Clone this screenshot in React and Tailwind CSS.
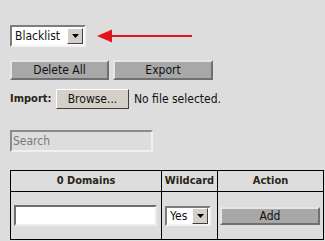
import React from 'react'

const font = { fontFamily: '"DejaVu Sans Condensed", "DejaVu Sans", Tahoma, sans-serif' }

const Raised = ({ children, className = '' }) => (
  <div
    className={`flex items-center justify-center border-2 border-t-[#e6e6e6] border-l-[#e6e6e6] border-b-[#707070] border-r-[#707070] bg-[#a8a8a8] text-[12px] text-[#111] ${className}`}
  >
    {children}
  </div>
)

const SelectBox = ({ value, className = '' }) => (
  <div
    className={`flex items-center bg-white border-2 border-t-[#7c7c7c] border-l-[#7c7c7c] border-b-[#f2f2f2] border-r-[#f2f2f2] ${className}`}
  >
    <span className="flex-1 pl-[3px] text-[12px] text-[#111] leading-none">{value}</span>
    <div className="w-[16px] h-[16px] mr-[1px] flex items-center justify-center bg-[#d4d0c8] border border-t-[#fff] border-l-[#fff] border-b-[#404040] border-r-[#404040]">
      <svg width="7" height="4" viewBox="0 0 7 4">
        <path d="M0 0h7L3.5 4z" fill="#000" />
      </svg>
    </div>
  </div>
)

export default function App() {
  return (
    <div className="w-[325px] h-[241px] bg-[#dddddd] overflow-hidden pl-[10px] pt-[25px]" style={font}>
      <div className="flex items-center">
        <SelectBox value="Blacklist" className="w-[76px] h-[22px]" />
        <svg width="100" height="16" viewBox="0 0 100 16" className="ml-[10px]">
          <path d="M16 7h80v2H16z" fill="#e3151c" />
          <path d="M1 8L16 1.5v13z" fill="#e3151c" />
        </svg>
      </div>

      <div className="flex gap-[4px] mt-[13px]">
        <Raised className="w-[99px] h-[20px]">Delete All</Raised>
        <Raised className="w-[100px] h-[20px]">Export</Raised>
      </div>

      <div className="flex items-center mt-[9px] text-[12px] text-[#111]">
        <span className="font-bold text-[11px] text-[#2a2418] w-[46px]">Import:</span>
        <div className="w-[73px] h-[20px] flex items-center justify-center bg-[#d4d0c8] border border-t-[#fff] border-l-[#fff] border-b-[#404040] border-r-[#404040] text-[12px]">
          Browse...
        </div>
        <span className="ml-[5px]">No file selected.</span>
      </div>

      <div className="mt-[21px] w-[143px] h-[22px] flex items-center border-2 border-t-[#8a8a8a] border-l-[#8a8a8a] border-b-[#f0f0f0] border-r-[#f0f0f0] pl-[1px] text-[12px] text-[#7a7a7a]">
        Search
      </div>

      <table className="mt-[18px] border-collapse text-[11px]">
        <thead>
          <tr className="h-[21px]">
            <th className="w-[151px] border border-black font-bold text-[#2a2418]">0 Domains</th>
            <th className="w-[56px] border border-black font-bold text-[#2a2418]">Wildcard</th>
            <th className="w-[106px] border border-black font-bold text-[#2a2418]">Action</th>
          </tr>
        </thead>
        <tbody>
          <tr className="h-[48px]">
            <td className="border border-black px-[3px]">
              <div className="w-[143px] h-[21px] bg-white border-2 border-t-[#6e6e6e] border-l-[#6e6e6e] border-b-[#ececec] border-r-[#ececec]" />
            </td>
            <td className="border border-black px-[3px]">
              <SelectBox value="Yes" className="w-[46px] h-[20px]" />
            </td>
            <td className="border border-black px-[2px]">
              <Raised className="w-[100px] h-[18px]">Add</Raised>
            </td>
          </tr>
        </tbody>
      </table>
    </div>
  )
}
